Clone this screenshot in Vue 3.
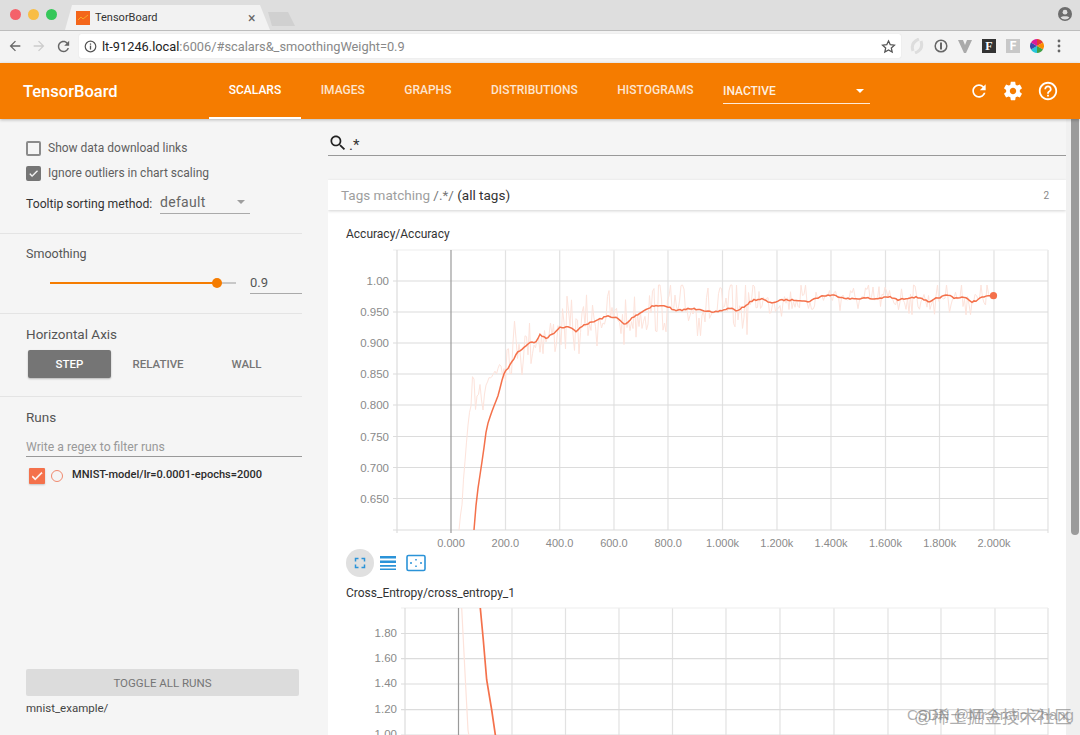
<script setup>
const smooth1 = [[474,530],[476.7,497],[483.3,453],[486.7,427],[491.7,412],[498.3,395],[503.3,375],[513.3,360],[516.7,353],[523.3,348],[530,342],[535,343],[540,335],[546.7,338],[555,332],[560,327],[570,327],[576,332],[583,325],[593,322],[600,319],[608,316],[617,318],[625,325],[633,317],[652,306],[667,306],[675,311],[688,309],[700,309],[713,313],[730,308],[738,311],[753,300],[762,299],[770,303],[783,300],[800,300],[807,302],[822,296],[832,295],[850,299],[867,298],[873,299],[890,297],[898,300],[912,297],[922,298],[929,303],[937,298],[948,295],[955,298],[963,297],[973,302],[983,297],[993.5,295.7]]
const smooth2 = [[480.3,608],[483.3,640],[486.7,680],[491.7,710],[495.5,736]]
const raw2 = [[461.7,608],[465,673],[468,730],[469,736]]
const toPts = a => a.map(p => p.join(',')).join(' ')

let seed = 7
const rnd = () => (seed = (seed * 16807) % 2147483647) / 2147483647

const lerp = (tbl, x) => {
  for (let i = 1; i < tbl.length; i++) {
    if (x <= tbl[i][0]) {
      const [a, b] = tbl[i - 1], [c, d] = tbl[i]
      return b + (d - b) * (x - a) / (c - a)
    }
  }
  return tbl[tbl.length - 1][1]
}

// the smoothed run: fine jitter between the traced points
const smoothPts = []
for (let x = 474; x < 993.5; x += 2) {
  const jitter = x < 505 ? 0 : (rnd() - 0.5) * 1.6
  smoothPts.push(x.toFixed(1) + ',' + (lerp(smooth1, x) + jitter).toFixed(1))
}
smoothPts.push('993.5,295.7')
const smoothLine = smoothPts.join(' ')

// the raw run: dense, spiky, heavy tailed
const head = [[459,530],[463,490],[466,447],[470,413],[474,388],[480,385],[490,380],[505,352],[520,338]]
const rawPts = []
for (let x = 459; x < 993; x += 1.5) {
  const base = x < 520 ? lerp(head, x) : lerp(smooth1, x)
  const spread = x < 470 ? 10 : x < 760 ? 62 : 36
  const r = rnd() - 0.5
  const tail = r * Math.abs(r) * 2
  rawPts.push(x.toFixed(1) + ',' + Math.max(285, base + tail * spread).toFixed(1))
}
const raw1 = rawPts.join(' ')

const hLines1 = [281, 312, 343, 374, 405, 436.5, 467.5, 498.5]
const yLabels1 = ['1.00', '0.950', '0.900', '0.850', '0.800', '0.750', '0.700', '0.650']
const vLines1 = [505.5, 559.7, 614, 668, 722.5, 777, 831, 885.5, 939.5, 994]
const xLabels1 = ['0.000', '200.0', '400.0', '600.0', '800.0', '1.000k', '1.200k', '1.400k', '1.600k', '1.800k', '2.000k']
const hLines2 = [633.5, 658.7, 684, 709.7, 735]
const yLabels2 = ['1.80', '1.60', '1.40', '1.20', '1.00']
const vLines2 = [512, 565.5, 619, 672.5, 726, 780, 834, 888, 941, 995]
const tabs = ['SCALARS', 'IMAGES', 'GRAPHS', 'DISTRIBUTIONS', 'HISTOGRAMS']
</script>

<template>
  <div class="page">
    <div class="tabstrip">
      <div class="lights"><i class="red"></i><i class="yellow"></i><i class="green"></i></div>
      <div class="tab">
        <svg class="favicon" width="14" height="14" viewBox="0 0 14 14"><rect width="14" height="14" fill="#f4661b"/><path d="M2 9l3-3 2 2 5-4" fill="none" stroke="#f9a825" stroke-width="1"/></svg>
        <span class="tab-title">TensorBoard</span>
        <span class="tab-x">×</span>
      </div>
      <div class="newtab"></div>
      <svg class="avatar" width="14" height="14" viewBox="0 0 14 14"><circle cx="7" cy="7" r="7" fill="#6d6d6d"/><circle cx="7" cy="5.2" r="2.4" fill="#ddd"/><path d="M2.6 10.6c1-1.8 7.8-1.8 8.8 0-1 1.2-2.6 2-4.4 2s-3.400-.8-4.400-2z" fill="#ddd"/></svg>
    </div>

    <div class="toolbar">
      <svg class="nav" width="16" height="16" viewBox="0 0 24 24"><path d="M20 11H7.800l5.600-5.600L12 4l-8 8 8 8 1.400-1.400L7.800 13H20z" fill="#666"/></svg>
      <svg class="nav" width="16" height="16" viewBox="0 0 24 24"><path d="M4 11h12.200l-5.600-5.600L12 4l8 8-8 8-1.400-1.400 5.600-5.600H4z" fill="#ccc"/></svg>
      <svg class="nav" width="17" height="17" viewBox="0 0 24 24"><path d="M17.650 6.350C16.200 4.900 14.210 4 12 4c-4.420 0-7.990 3.580-7.990 8s3.570 8 7.990 8c3.730 0 6.840-2.550 7.730-6h-2.080c-.82 2.330-3.040 4-5.650 4-3.310 0-6-2.690-6-6s2.690-6 6-6c1.660 0 3.140.69 4.220 1.780L13 11h7V4l-2.350 2.350z" fill="#666"/></svg>
      <div class="omnibox">
        <svg width="13" height="13" viewBox="0 0 14 14"><circle cx="7" cy="7" r="5.700" fill="none" stroke="#555" stroke-width="1.300"/><rect x="6.300" y="6" width="1.400" height="4.300" fill="#555"/><rect x="6.300" y="3.700" width="1.400" height="1.400" fill="#555"/></svg>
        <span class="url"><b>lt-91246.local</b>:6006/#scalars&amp;_smoothingWeight=0.9</span>
        <svg class="star" width="15" height="15" viewBox="0 0 24 24"><path d="M12 3l2.800 6.100 6.700.8-5 4.500 1.400 6.600L12 17.600 6.100 21l1.400-6.600-5-4.500 6.700-.8z" fill="none" stroke="#555" stroke-width="2"/></svg>
      </div>
      <div class="exts">
        <svg width="14" height="16" viewBox="0 0 14 16"><path d="M9 1C4 3 1 7 3 13M5 15c5-2 8-6 6-12" fill="none" stroke="#ddd" stroke-width="3"/></svg>
        <svg width="14" height="14" viewBox="0 0 14 14"><circle cx="7" cy="7" r="5.800" fill="none" stroke="#666" stroke-width="1.500"/><rect x="6" y="3.500" width="2" height="7" fill="#666"/></svg>
        <svg width="14" height="13" viewBox="0 0 14 13"><path d="M0 0h5l2 5 2-5h5L8 13H6z" fill="#aaa"/></svg>
        <span class="ext-f dark">F</span>
        <span class="ext-f light">F</span>
        <svg width="14" height="14" viewBox="0 0 14 14"><path d="M7 7V0a7 7 0 0 1 6 3.500z" fill="#e53935"/><path d="M7 7l6-3.500A7 7 0 0 1 13 10.500z" fill="#fb8c00"/><path d="M7 7l6 3.500A7 7 0 0 1 7 14z" fill="#43a047"/><path d="M7 7v7a7 7 0 0 1-6-3.500z" fill="#26c6da"/><path d="M7 7l-6 3.500A7 7 0 0 1 1 3.500z" fill="#3949ab"/><path d="M7 7L1 3.500A7 7 0 0 1 7 0z" fill="#d81b9a"/></svg>
        <svg class="dots" width="4" height="14" viewBox="0 0 4 14"><circle cx="2" cy="2" r="1.400" fill="#666"/><circle cx="2" cy="7" r="1.400" fill="#666"/><circle cx="2" cy="12" r="1.400" fill="#666"/></svg>
      </div>
    </div>

    <header class="appbar">
      <div class="brand">TensorBoard</div>
      <nav class="tabs">
        <a v-for="(t, i) in tabs" :key="t" :class="['navtab', { active: i === 0 }]">{{ t }}</a>
      </nav>
      <div class="inactive"><span>INACTIVE</span><i class="caret white"></i></div>
      <div class="actions">
        <svg width="20" height="20" viewBox="0 0 24 24"><path d="M17.650 6.350C16.200 4.900 14.210 4 12 4c-4.420 0-7.990 3.580-7.990 8s3.570 8 7.990 8c3.730 0 6.840-2.550 7.730-6h-2.080c-.82 2.330-3.040 4-5.650 4-3.310 0-6-2.690-6-6s2.690-6 6-6c1.660 0 3.140.69 4.220 1.780L13 11h7V4l-2.350 2.350z" fill="#fff"/></svg>
        <svg width="22" height="22" viewBox="0 0 24 24"><path d="M19.430 12.980c.04-.32.07-.64.07-.98s-.03-.66-.07-.98l2.110-1.650c.19-.15.24-.42.12-.64l-2-3.460c-.12-.22-.39-.3-.61-.22l-2.490 1c-.52-.4-1.080-.73-1.690-.98l-.38-2.650C14.460 2.180 14.250 2 14 2h-4c-.25 0-.46.18-.49.42l-.38 2.650c-.61.25-1.170.59-1.690.98l-2.490-1c-.23-.09-.49 0-.61.22l-2 3.460c-.13.22-.07.49.12.64l2.110 1.650c-.04.32-.07.65-.07.98s.03.66.07.98l-2.110 1.650c-.19.15-.24.42-.12.64l2 3.460c.12.22.39.3.61.22l2.490-1c.52.4 1.080.73 1.690.98l.38 2.650c.03.24.24.42.49.42h4c.25 0 .46-.18.49-.42l.38-2.650c.61-.25 1.170-.59 1.690-.98l2.490 1c.23.09.49 0 .61-.22l2-3.460c.12-.22.07-.49-.12-.64l-2.110-1.650zM12 15.500c-1.930 0-3.500-1.570-3.500-3.500s1.570-3.500 3.500-3.500 3.500 1.570 3.500 3.500-1.570 3.500-3.500 3.500z" fill="#fff"/></svg>
        <svg width="22" height="22" viewBox="0 0 24 24"><path d="M11 18h2v-2h-2v2zm1-16C6.480 2 2 6.480 2 12s4.480 10 10 10 10-4.480 10-10S17.520 2 12 2zm0 18c-4.410 0-8-3.590-8-8s3.590-8 8-8 8 3.590 8 8-3.590 8-8 8zm0-14c-2.210 0-4 1.790-4 4h2c0-1.100.9-2 2-2s2 .9 2 2c0 2-3 1.750-3 5h2c0-2.250 3-2.500 3-5 0-2.210-1.790-4-4-4z" fill="#fff"/></svg>
      </div>
    </header>

    <div class="body">
      <aside class="sidebar">
        <section class="sec sec-options">
          <label class="check"><i class="box"></i>Show data download links</label>
          <label class="check"><i class="box on"><svg width="13" height="13" viewBox="0 0 24 24"><path d="M9 16.200 4.800 12l-1.400 1.400L9 19 21 7l-1.400-1.400z" fill="#fff" stroke="#fff"/></svg></i>Ignore outliers in chart scaling</label>
          <div class="sort">
            <span class="sort-label">Tooltip sorting method:</span>
            <div class="select"><span>default</span><i class="caret gray"></i></div>
          </div>
        </section>
        <section class="sec sec-smooth">
          <div class="sec-title small">Smoothing</div>
          <div class="slider-row">
            <div class="slider"><div class="fill"></div><div class="thumb"></div></div>
            <div class="num">0.9</div>
          </div>
        </section>
        <section class="sec sec-axis">
          <div class="sec-title">Horizontal Axis</div>
          <div class="axis-btns">
            <span class="abtn on">STEP</span>
            <span class="abtn">RELATIVE</span>
            <span class="abtn">WALL</span>
          </div>
        </section>
        <section class="sec-runs">
          <div class="sec-title">Runs</div>
          <div class="filter">Write a regex to filter runs</div>
          <div class="run">
            <i class="runbox"><svg width="14" height="14" viewBox="0 0 24 24"><path d="M9 16.200 4.800 12l-1.400 1.400L9 19 21 7l-1.400-1.400z" fill="#fff" stroke="#fff"/></svg></i>
            <i class="radio"></i>
            <span>MNIST-model/lr=0.0001-epochs=2000</span>
          </div>
          <div class="toggle">TOGGLE ALL RUNS</div>
          <div class="logdir">mnist_example/</div>
        </section>
      </aside>

      <main class="main">
        <div class="search">
          <svg width="20" height="20" viewBox="0 0 24 24"><path d="M15.500 14h-.79l-.28-.27C15.410 12.590 16 11.110 16 9.500 16 5.910 13.090 3 9.500 3S3 5.910 3 9.500 5.910 16 9.500 16c1.610 0 3.090-.59 4.230-1.570l.27.28v.79l5 4.990L20.490 19l-4.990-5zm-6 0C7.010 14 5 11.990 5 9.500S7.010 5 9.500 5 14 7.010 14 9.500 11.990 14 9.500 14z" fill="#222"/></svg>
          <span>.*</span>
        </div>
        <div class="card-head">
          <span class="tm">Tags matching <em>/.*/</em> <b>(all tags)</b></span>
          <span class="count">2</span>
        </div>
        <div class="card">
          <div class="chart-title">Accuracy/Accuracy</div>
          <svg class="chart" width="738" height="310" viewBox="328 243 738 310">
            <g stroke="#e2e2e2" stroke-width="1.200">
              <line v-for="x in vLines1" :key="x" :x1="x" :x2="x" y1="250" y2="530"/>
              <line x1="1048" x2="1048" y1="250" y2="533"/>
            </g>
            <g stroke="#dcdcdc" stroke-width="1.200">
              <line x1="393" x2="1048" y1="250" y2="250" stroke="#eee"/>
              <line v-for="y in hLines1" :key="y" x1="393" x2="1048" :y1="y" :y2="y"/>
              <line x1="393" x2="1048" y1="530" y2="530"/>
              <line x1="397" x2="397" y1="250" y2="533"/>
            </g>
            <line x1="451" x2="451" y1="250" y2="533" stroke="#9a9a9a" stroke-width="1.200"/>
            <polyline :points="raw1" fill="none" stroke="#fde3db" stroke-width="1"/>
            <polyline :points="smoothLine" fill="none" stroke="#f4714b" stroke-width="1.500"/>
            <circle cx="993.500" cy="295.700" r="3.600" fill="#f4714b"/>
            <g class="ylab"><text v-for="(l, i) in yLabels1" :key="l" x="389" :y="hLines1[i] + 4">{{ l }}</text></g>
            <g class="xlab"><text v-for="(l, i) in xLabels1" :key="l" :x="451 + i * 54.300" y="547">{{ l }}</text></g>
          </svg>
          <div class="chart-actions">
            <span class="cbtn on"><svg width="18" height="18" viewBox="0 0 24 24"><path d="M7 14H5v5h5v-2H7v-3zm-2-4h2V7h3V5H5v5zm12 7h-3v2h5v-5h-2v3zM14 5v2h3v3h2V5h-5z" fill="#2b93d8"/></svg></span>
            <span class="cbtn"><svg width="18" height="18" viewBox="0 0 18 18"><path d="M1 2h16v2.500H1zM1 6.500h16V9H1zM1 11h16v1.800H1zM1 14.500h16V16H1z" fill="#2b93d8"/></svg></span>
            <span class="cbtn"><svg width="20" height="18" viewBox="0 0 20 18"><rect x="1" y="1.500" width="18" height="15" rx="1.500" fill="none" stroke="#2b93d8" stroke-width="1.600"/><path d="M4 9h2M14 9h2M10 5v1.500M10 11.500V13" stroke="#2b93d8" stroke-width="1.500"/></svg></span>
          </div>
          <div class="chart-title second">Cross_Entropy/cross_entropy_1</div>
          <svg class="chart lower" width="738" height="130" viewBox="328 607 738 130">
            <g stroke="#e2e2e2" stroke-width="1.200">
              <line v-for="x in vLines2" :key="x" :x1="x" :x2="x" y1="608" y2="737"/>
              <line x1="1048" x2="1048" y1="608" y2="737"/>
            </g>
            <g stroke="#dcdcdc" stroke-width="1.200">
              <line x1="401" x2="1048" y1="608" y2="608" stroke="#eee"/>
              <line v-for="y in hLines2" :key="y" x1="401" x2="1048" :y1="y" :y2="y"/>
              <line x1="405" x2="405" y1="608" y2="737"/>
            </g>
            <line x1="458.500" x2="458.500" y1="608" y2="737" stroke="#9a9a9a" stroke-width="1.200"/>
            <polyline :points="toPts(raw2)" fill="none" stroke="#fde3db" stroke-width="1.200"/>
            <polyline :points="toPts(smooth2)" fill="none" stroke="#f4714b" stroke-width="1.700"/>
            <g class="ylab"><text v-for="(l, i) in yLabels2" :key="l" x="397" :y="hLines2[i] + 3">{{ l }}</text></g>
          </svg>
        </div>
      </main>
      <div class="track"><div class="scroll-thumb"></div></div>
    </div>

    <div class="watermark"><span>CSDN @Mr.Arctic Zhang</span><span class="wm2">@稀土掘金技术社区</span></div>
  </div>
</template>

<style>
html, body { margin: 0; overflow: hidden; }
</style>

<style scoped>
.page { position: relative; width: 1080px; height: 735px; overflow: hidden; display: flex; flex-direction: column; background: #f5f5f5; font-family: Roboto, "Liberation Sans", sans-serif; color: #333; }
i { display: block; font-style: normal; }

.tabstrip { height: 30px; flex: none; display: flex; align-items: flex-end; background: #dedede; position: relative; box-sizing: border-box; }
.lights { position: absolute; left: 10px; top: 9px; display: flex; gap: 7px; }
.lights i { width: 11px; height: 11px; border-radius: 50%; }
.red { background: #f4626a; }
.yellow { background: #f8bd45; }
.green { background: #35c759; }
.tab { margin-left: 65px; width: 205px; height: 25px; background: #f2f2f2; clip-path: polygon(0 100%, 7px 0, 195px 0, 100% 100%); display: flex; align-items: center; padding-left: 11px; box-sizing: border-box; font-size: 11px; color: #333; }
.tab-title { margin-left: 5px; width: 153px; }
.tab-x { color: #666; font-size: 14px; }
.newtab { width: 27px; height: 14px; margin: 0 0 4px -2px; background: #d0d0d0; clip-path: polygon(0 0, 20px 0, 100% 100%, 4px 100%); }
.avatar { position: absolute; right: 8px; top: 7px; }

.toolbar { height: 33px; flex: none; background: #f3f3f3; border-top: 1px solid #bdbdbd; box-sizing: border-box; display: flex; align-items: center; padding: 0 0 2px 7px; }
.nav { margin-right: 8px; flex: none; }
.omnibox { width: 822px; height: 24px; margin-left: -1px; background: #fff; border-radius: 2px; box-shadow: 0 0 1px #ccc; display: flex; align-items: center; padding: 0 5px; box-sizing: border-box; }
.url { margin-left: 5px; font-size: 12.800px; color: #888; flex: 1; }
.url b { font-weight: 400; color: #222; }
.exts { display: flex; align-items: center; margin-left: 9px; gap: 10px; }
.dots { margin-left: 3px; }
.ext-f { width: 14px; height: 14px; display: block; font: 700 12px/14px "Liberation Serif", serif; text-align: center; color: #fff; }
.ext-f.dark { background: #333; }
.ext-f.light { background: #c8c8c8; font-family: Roboto, sans-serif; }

.appbar { height: 56px; flex: none; background: #f57c00; color: #fff; display: flex; align-items: center; position: relative; box-shadow: 0 1px 3px rgba(0,0,0,.25); z-index: 2; }
.brand { font-size: 16.500px; font-weight: 500; margin-left: 23px; width: 186px; flex: none; }
.tabs { display: flex; align-self: stretch; width: 514px; flex: none; }
.navtab { display: flex; align-items: center; justify-content: center; font-size: 12px; font-weight: 500; color: rgba(255,255,255,.82); height: 56px; box-sizing: border-box; padding: 0 19.750px; border-bottom: 2px solid transparent; }
.navtab.active { color: #fff; border-bottom-color: #fff; }
.inactive { width: 147px; height: 24px; margin-top: 1px; border-bottom: 1px solid rgba(255,255,255,.85); display: flex; align-items: center; justify-content: space-between; font-size: 12px; font-weight: 500; padding-right: 6px; box-sizing: border-box; color: rgba(255,255,255,.9); }
.caret { width: 0; height: 0; border-left: 4px solid transparent; border-right: 4px solid transparent; }
.caret.white { border-top: 4px solid #fff; }
.caret.gray { border-top: 4px solid #9e9e9e; }
.actions { display: flex; align-items: center; gap: 13px; margin-left: 99px; }

.body { flex: 1; display: flex; min-height: 0; }
.sidebar { width: 318px; flex: none; display: flex; flex-direction: column; font-size: 12px; }
.sec { width: 302px; box-sizing: border-box; border-bottom: 1px solid #e4e4e4; padding-left: 26px; flex: none; }
.sec-options { height: 115px; padding-top: 21px; }
.check { display: flex; align-items: center; height: 16px; margin-bottom: 9px; color: #5f5f5f; font-size: 12px; }
.box { width: 15px; height: 15px; box-sizing: border-box; border: 2px solid #8b8b8b; border-radius: 2px; margin-right: 7px; display: flex; align-items: center; justify-content: center; }
.box.on { background: #757575; border-color: #757575; }
.sort { display: flex; align-items: flex-start; margin-top: 15px; }
.sort-label { color: #333; font-size: 12.200px; margin-top: 1px; width: 134px; flex: none; }
.select { width: 90px; height: 24px; margin-top: -6px; border-bottom: 1px solid #aaa; display: flex; align-items: center; justify-content: space-between; padding-right: 5px; box-sizing: border-box; color: #666; font-size: 14px; letter-spacing: .3px; }
.sec-smooth { height: 80px; padding-top: 12px; }
.sec-title { font-size: 13.500px; color: #555; line-height: 16px; }
.sec-title.small { font-size: 12.500px; }
.slider-row { display: flex; align-items: flex-start; margin-top: 20px; }
.slider { width: 186px; height: 2px; margin: 0 0 0 24px; background: #c8c8c8; position: relative; }
.fill { width: 167px; height: 2px; background: #f57c00; }
.thumb { position: absolute; left: 162px; top: -4px; width: 10px; height: 10px; border-radius: 50%; background: #f57c00; }
.num { width: 52px; margin: -9px 0 0 14px; height: 21px; line-height: 20px; border-bottom: 1px solid #aaa; color: #555; font-size: 13px; box-sizing: border-box; }
.sec-axis { height: 83px; padding-top: 12px; }
.axis-btns { display: flex; margin: 8px 0 0 2px; }
.abtn { width: 83px; height: 28px; display: flex; align-items: center; justify-content: center; font-size: 11.500px; font-weight: 500; color: #757575; margin-right: 5.500px; border-radius: 2px; }
.abtn.on { background: #757575; color: #fff; box-shadow: 0 1px 2px rgba(0,0,0,.25); }
.sec-runs { flex: 1; width: 302px; box-sizing: border-box; padding: 12px 0 0 26px; display: flex; flex-direction: column; min-height: 0; }
.filter { margin-top: 12px; height: 20px; line-height: 20px; border-bottom: 1px solid #999; box-sizing: border-box; font-size: 12.200px; color: #999; }
.run { display: flex; align-items: center; margin: 10px 0 0 3px; font-size: 11.050px; font-weight: 500; color: #2b2b2b; }
.runbox { width: 16px; height: 16px; border-radius: 1px; background: #f4714b; display: flex; align-items: center; justify-content: center; box-shadow: 0 1px 2px rgba(0,0,0,.2); margin-top: 1px; }
.radio { width: 10px; height: 10px; border: 1.500px solid #f0896e; border-radius: 50%; margin: 1px 9px 0 6px; }
.run span { margin-top: -3px; }
.toggle { margin-top: auto; width: 273px; height: 27px; background: #dcdcdc; color: #757575; font-size: 11.500px; display: flex; align-items: center; justify-content: center; border-radius: 2px; }
.logdir { font-size: 11.500px; color: #444; margin: 5px 0 20px; line-height: 14px; }

.main { width: 738px; margin-left: 10px; flex: none; display: flex; flex-direction: column; min-height: 0; overflow: hidden; }
.search { height: 23px; flex: none; margin-top: 13px; border-bottom: 1px solid #999; display: flex; align-items: flex-start; font-size: 15px; color: #333; }
.search svg { margin-top: 1px; }
.search span { margin-left: 1px; line-height: 26px; }
.card-head { height: 30px; flex: none; margin-top: 24px; background: #fff; display: flex; align-items: center; justify-content: space-between; padding: 0 17px 0 13px; box-shadow: 0 1px 3px rgba(0,0,0,.18); position: relative; }
.tm { font-size: 13.500px; color: #9e9e9e; }
.tm em { font-style: normal; color: #777; }
.tm b { font-weight: 400; color: #333; }
.count { font-size: 10px; color: #888; }
.card { flex: 1; background: #fff; min-height: 0; }
.chart-title { font-size: 12px; color: #333; margin: 17px 0 0 18px; line-height: 14px; }
.chart-title.second { margin-top: 9px; }
.chart { display: block; margin-top: 2px; }
.chart.lower { margin-top: 7px; }
.chart-actions { display: flex; align-items: center; margin: -4px 0 0 18px; height: 28px; }
.cbtn { width: 28px; height: 28px; display: flex; align-items: center; justify-content: center; border-radius: 50%; }
.cbtn.on { background: #e0e0e0; }
.ylab text { font: 11.500px "Liberation Sans", sans-serif; fill: #8a8a8a; text-anchor: end; }
.xlab text { font: 11px "Liberation Sans", sans-serif; fill: #8a8a8a; text-anchor: middle; }

.track { flex: 1; background: #f0f0f0; position: relative; }
.scroll-thumb { width: 8px; height: 416px; margin-left: 5px; background: #9b9b9b; border-radius: 0 0 4px 4px; }

.watermark { position: absolute; right: 7px; bottom: 9px; width: 166px; height: 20px; font-family: "Liberation Sans", "Noto Sans CJK SC", sans-serif; font-size: 15px; color: rgba(120,120,120,.6); white-space: nowrap; z-index: 3; }
.watermark span { position: absolute; left: 0; top: 0; }
.watermark .wm2 { left: 7px; top: 1px; font-size: 17.500px; line-height: 20px; }
</style>
